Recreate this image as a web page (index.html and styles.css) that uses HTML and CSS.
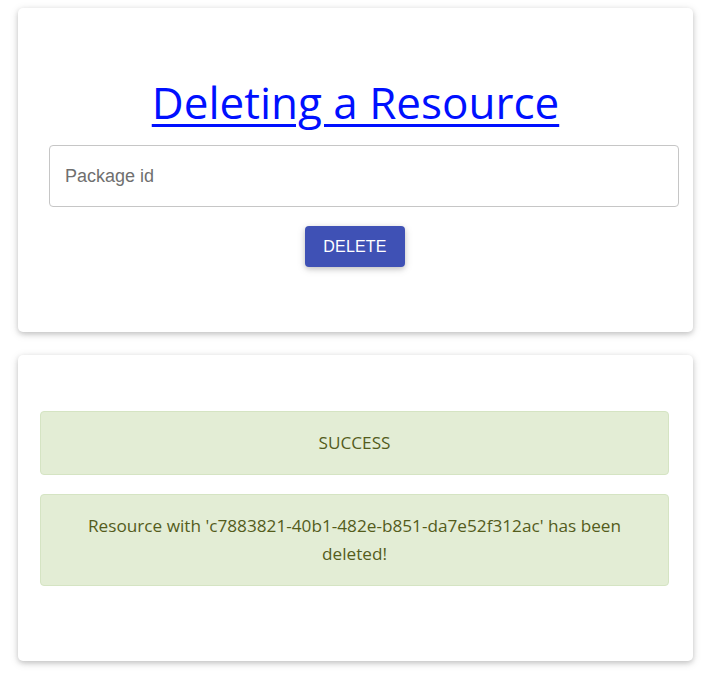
FILE: index.html
```html
<!DOCTYPE html>
<html lang="en">
<head>
<meta charset="utf-8">
<title>Deleting a Resource</title>
<link rel="stylesheet" href="styles.css">
</head>
<body>
<main class="page">
  <section class="card card-form">
    <h1 class="title"><a href="#" class="title-link">Deleting a Resource</a></h1>
    <input class="field" type="text" placeholder="Package id">
    <div class="actions">
      <button class="btn" type="button">DELETE</button>
    </div>
  </section>
  <section class="card card-result">
    <div class="alert alert-single">SUCCESS</div>
    <div class="alert">Resource with 'c7883821-40b1-482e-b851-da7e52f312ac' has been deleted!</div>
  </section>
</main>
</body>
</html>
```
FILE: styles.css
```css
html, body {
  margin: 0;
  padding: 0;
  background: #ffffff;
}
body {
  font-family: "Open Sans", "Noto Sans", sans-serif;
}
.page {
  display: flex;
  flex-direction: column;
  gap: 23px;
  padding: 8px 19px 20px 18px;
}
.card {
  background: #fff;
  border-radius: 5px;
  box-shadow: 0 2px 5px 0 rgba(0,0,0,.16), 0 2px 10px 0 rgba(0,0,0,.12);
}
.card-form {
  height: 324px;
  box-sizing: border-box;
  padding-top: 68px;
  display: flex;
  flex-direction: column;
}
.title {
  margin: 0;
  text-align: center;
  font-size: 44px;
  font-weight: 400;
  line-height: 52px;
}
.title-link {
  color: #0010ff;
  text-decoration: underline;
  text-decoration-thickness: 3px;
  text-underline-offset: 5px;
}
.field {
  margin: 17px 14px 0 31px;
  height: 62px;
  box-sizing: border-box;
  border: 1px solid #c6c6c6;
  border-radius: 4px;
  padding: 0 15px;
  font-family: "Liberation Sans", Arial, sans-serif;
  font-size: 18px;
  color: #333;
  outline: none;
}
.field::placeholder {
  color: #6f6f6f;
}
.actions {
  display: flex;
  justify-content: center;
  margin-top: 19px;
  padding-right: 1px;
}
.btn {
  width: 100px;
  height: 41px;
  border: none;
  border-radius: 4px;
  background: #3f51b5;
  color: #fff;
  font-family: "Liberation Sans", Arial, sans-serif;
  font-size: 16px;
  letter-spacing: 0.2px;
  box-shadow: 0 2px 5px 0 rgba(0,0,0,.16), 0 2px 10px 0 rgba(0,0,0,.12);
  cursor: pointer;
}
.card-result {
  height: 306px;
  box-sizing: border-box;
  padding: 56px 24px 0 22px;
  display: flex;
  flex-direction: column;
  gap: 19px;
}
.alert {
  background: #e3edd5;
  border: 1px solid #d5e4c3;
  border-radius: 4px;
  color: #545c1c;
  text-align: center;
  font-size: 17.2px;
  line-height: 28px;
  padding: 17px 30px;
}
```
